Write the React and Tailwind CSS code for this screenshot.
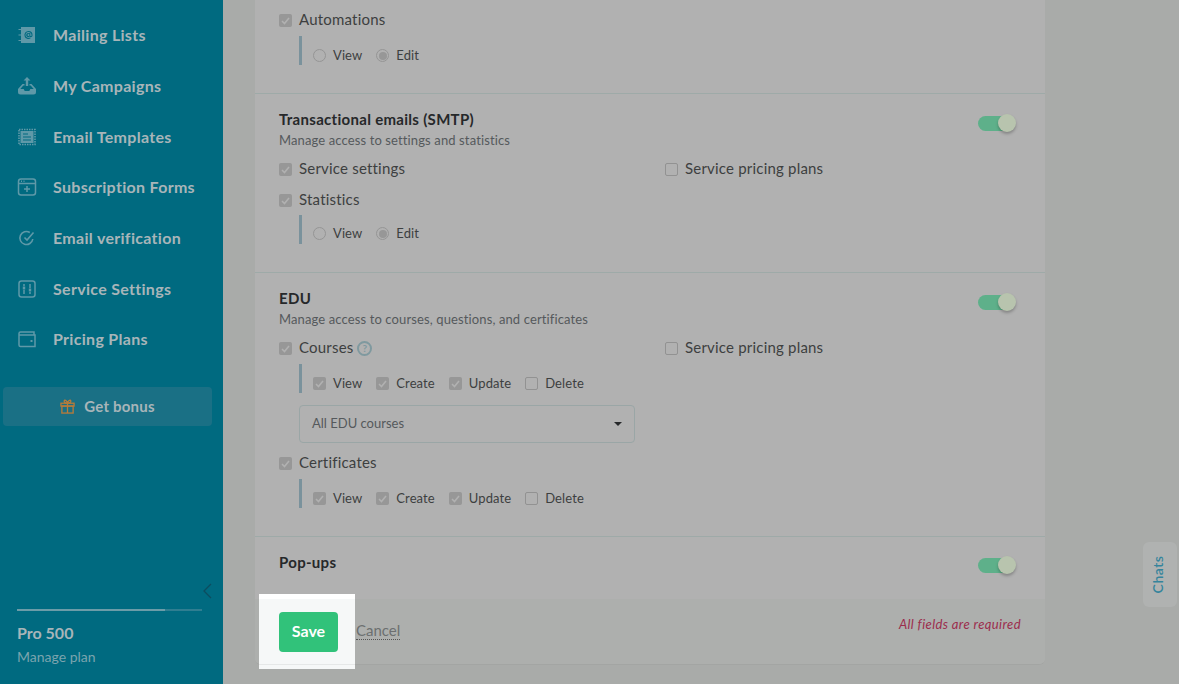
import React from 'react';

const iconClass = 'w-[20px] h-[20px] text-[#5f99a8] shrink-0';

const MailIcon = () => (
  <svg viewBox="0 0 20 20" className={iconClass} fill="currentColor">
    <path fillRule="evenodd" d="M4 2h14v16H4zM11.500 6a4 4 0 1 0 2.200 7.300l-.6-.8a3 3 0 1 1 1.400-2.500v.5a.6.6 0 0 1-1.200 0V8h-1v.4a2 2 0 1 0 .3 3.100 1.600 1.600 0 0 0 2.900-1V10a4 4 0 0 0-4-4zm0 3a1 1 0 1 1 0 2 1 1 0 0 1 0-2z" />
    <path d="M1.500 4H5v1H1.500zM1.500 9.500H5v1H1.500zM1.500 15H5v1H1.500z" />
  </svg>
);

const CampaignIcon = () => (
  <svg viewBox="0 0 20 20" className={iconClass} fill="currentColor">
    <path d="M10 1l3.500 3.500h-2.300V10H8.800V4.500H6.500z" />
    <path d="M5.500 8h2v1.500H6.300L3.300 13h3.400l1 2h4.600l1-2h3.400l-3-3.500h-1.200V8h2L19 13v3a2.500 2.500 0 0 1-2.500 2.500h-13A2.500 2.500 0 0 1 1 16v-3z" />
  </svg>
);

const TemplateIcon = () => (
  <svg viewBox="0 0 20 20" className={iconClass} fill="none" stroke="currentColor">
    <rect x="2" y="2.500" width="16" height="15" strokeWidth="1.600" strokeDasharray="1.500 1" />
    <rect x="3.500" y="4" width="13" height="12" fill="currentColor" stroke="none" />
    <path d="M6 7h5M6 10h8M6 13h8" stroke="#006a80" strokeWidth="1.100" />
  </svg>
);

const FormIcon = () => (
  <svg viewBox="0 0 20 20" className={iconClass} fill="none" stroke="currentColor" strokeWidth="1.500">
    <rect x="1.500" y="2" width="17" height="16" rx="2.500" />
    <path d="M2 6.500h16M4 4.300h1M6.500 4.300h1M10 9v6M7 12h6" />
  </svg>
);

const VerifyIcon = () => (
  <svg viewBox="0 0 20 20" className={iconClass} fill="none" stroke="currentColor" strokeWidth="1.600">
    <path d="M15.800 11a6.500 6.500 0 1 1-3-6.500" />
    <path d="M7.500 9.500l2.500 2.500 6.500-7.500" />
  </svg>
);

const SettingsIcon = () => (
  <svg viewBox="0 0 20 20" className={iconClass} fill="none" stroke="currentColor" strokeWidth="1.500">
    <rect x="2" y="2" width="16" height="16" rx="2.500" />
    <path d="M7 5v2M7 11v4M13 5v4M13 13v2" />
    <rect x="5.800" y="7.500" width="2.400" height="3" fill="currentColor" stroke="none" />
    <rect x="11.800" y="9.500" width="2.400" height="3" fill="currentColor" stroke="none" />
  </svg>
);

const WalletIcon = () => (
  <svg viewBox="0 0 20 20" className={iconClass} fill="none" stroke="currentColor" strokeWidth="1.500">
    <path d="M17 6V3H3.500A1.500 1.500 0 0 0 2 4.500V16a1.500 1.500 0 0 0 1.500 1.500h14.500V6H2.500" />
    <path d="M13.500 12h2" strokeWidth="2" />
  </svg>
);

const GiftIcon = () => (
  <svg viewBox="0 0 16 16" className="w-[15px] h-[15px] text-[#b97b3a]" fill="none" stroke="currentColor" strokeWidth="1.400">
    <rect x="1" y="4.500" width="14" height="3" />
    <rect x="2" y="7.500" width="12" height="7.500" />
    <path d="M8 4.500V15M8 4.500C6 4.500 4 3.500 4.500 2S7.500 1.500 8 4.500zM8 4.500c2 0 4-1 3.500-2.500S8.500 1.500 8 4.500z" />
  </svg>
);

const navItems = [
  { label: 'Mailing Lists', icon: MailIcon },
  { label: 'My Campaigns', icon: CampaignIcon },
  { label: 'Email Templates', icon: TemplateIcon },
  { label: 'Subscription Forms', icon: FormIcon },
  { label: 'Email verification', icon: VerifyIcon },
  { label: 'Service Settings', icon: SettingsIcon },
  { label: 'Pricing Plans', icon: WalletIcon },
];

const Check = ({ checked }) => (
  <span className={`w-[13px] h-[13px] rounded-[2px] shrink-0 flex items-center justify-center ${checked ? 'bg-[#979797]' : 'border border-[#929292]'}`}>
    {checked && (
      <svg viewBox="0 0 13 13" className="w-[13px] h-[13px]" fill="none" stroke="#b1b1b1" strokeWidth="1.600">
        <path d="M3 7l2.500 2.500L10 4" />
      </svg>
    )}
  </span>
);

const Radio = ({ checked }) => (
  <span className="w-[13px] h-[13px] rounded-full border border-[#959595] shrink-0 flex items-center justify-center">
    {checked && <span className="w-[8px] h-[8px] rounded-full bg-[#979797]" />}
  </span>
);

const CheckRow = ({ label, checked = true, help, className = '' }) => (
  <div className={`flex items-center gap-[7px] h-[19px] text-[15px] tracking-[0.2px] text-[#3d3f40] ${className}`}>
    <Check checked={checked} />
    <span className="-mt-[2px]">{label}</span>
    {help && (
      <span className="w-[15px] h-[15px] -ml-[3px] rounded-full border-2 border-[#7f999f] text-[#7f999f] text-[10px] font-bold flex items-center justify-center">?</span>
    )}
  </div>
);

const SubRow = ({ children, tight, className = '' }) => (
  <div className={`border-l-[3px] border-[#7a929c] h-[29px] pl-[11px] flex items-center gap-[14px] text-[13px] tracking-[0.1px] text-[#3d3f40] ${tight ? 'pt-[8px]' : 'pt-[10px]'} ${className}`}>
    {children}
  </div>
);

const SubOption = ({ label, checked, radio }) => (
  <label className="flex items-center gap-[7px]">
    {radio ? <Radio checked={checked} /> : <Check checked={checked} />}
    <span>{label}</span>
  </label>
);

const CrudRow = ({ className }) => (
  <SubRow className={className}>
    <SubOption label="View" checked />
    <SubOption label="Create" checked />
    <SubOption label="Update" checked />
    <SubOption label="Delete" checked={false} />
  </SubRow>
);

const ModeRow = ({ className, tight }) => (
  <SubRow className={className} tight={tight}>
    <SubOption label="View" radio checked={false} />
    <SubOption label="Edit" radio checked />
  </SubRow>
);

const Toggle = () => (
  <div className="absolute right-[29px] w-[38px] h-[18px] flex items-center">
    <span className="w-[32px] h-[15px] rounded-full bg-[#5eb08a]" />
    <span className="absolute right-0 w-[18px] h-[18px] rounded-full bg-[#b8c4ae] shadow-[0_2px_3px_rgba(0,0,0,0.25)]" />
  </div>
);

const SectionHead = ({ title, subtitle }) => (
  <div className="relative">
    <div className="text-[15px] leading-[20px] font-bold tracking-[0.3px] text-[#26282a]">{title}</div>
    {subtitle && <div className="text-[13px] leading-[18px] mt-[2px] tracking-[0.12px] text-[#55595c]">{subtitle}</div>}
  </div>
);

export default function App() {
  return (
    <div className="relative flex h-[684px] overflow-hidden bg-[#a9aba9] font-['Lato',sans-serif]">
      <aside className="w-[223px] shrink-0 bg-[#006a80] flex flex-col relative">
        <nav className="pt-[10px]">
          {navItems.map(({ label, icon: Icon }) => (
            <div key={label} className="h-[50.700px] flex items-center pl-[17px] gap-[16px] text-[16px] tracking-[0.3px] font-bold text-[#a8b5b9]">
              <Icon />
              <span>{label}</span>
            </div>
          ))}
        </nav>
        <div className="mx-[3px] mt-[22.100px] w-[209px] h-[39px] rounded-[4px] bg-[#1a7085] flex items-center justify-center gap-[9px] text-[15px] tracking-[0.2px] font-bold text-[#a8b5b9]">
          <GiftIcon />
          <span className="-mt-px">Get bonus</span>
        </div>
        <div className="mt-auto px-[17px] pb-[18px]">
          <div className="h-[2px] w-[185px] bg-[#2f7e91] mb-[12px]">
            <div className="h-full w-[148px] bg-[#6c9ca8]" />
          </div>
          <div className="text-[16px] leading-[20px] font-bold text-[#a8b5b9]">Pro 500</div>
          <div className="text-[14px] leading-[18px] mt-[5px] text-[#7ba4ae]">Manage plan</div>
        </div>
        <svg viewBox="0 0 10 16" className="absolute left-[202px] top-[583px] w-[10px] h-[16px] text-[#0c4d5f]" fill="none" stroke="currentColor" strokeWidth="1.300">
          <path d="M9 1L2 8l7 7" />
        </svg>
      </aside>

      <main className="flex-1 pl-[32px] pr-[134px]">
        <div className="bg-[#b1b1b1] rounded-b-[6px] border-b border-[#a3a5a3]">
          <section className="h-[93px] px-[24px] pt-[11px]">
            <CheckRow label="Automations" />
            <ModeRow className="ml-[20px] mt-[6px]" />
          </section>

          <section className="relative h-[179px] border-t border-[#9eaaa8] px-[24px] pt-[15px]">
            <SectionHead title="Transactional emails (SMTP)" subtitle="Manage access to settings and statistics" />
            <div className="absolute top-[20px] right-0 left-0 flex justify-end items-center h-[18px]"><Toggle /></div>
            <div className="grid grid-cols-[386px_1fr] mt-[11px]">
              <CheckRow label="Service settings" />
              <CheckRow label="Service pricing plans" checked={false} />
            </div>
            <CheckRow label="Statistics" className="mt-[12px]" />
            <ModeRow tight className="ml-[20px] mt-[5px]" />
          </section>

          <section className="relative h-[264px] border-t border-[#9eaaa8] px-[24px] pt-[15px]">
            <SectionHead title="EDU" subtitle="Manage access to courses, questions, and certificates" />
            <div className="absolute top-[20px] right-0 left-0 flex justify-end items-center h-[18px]"><Toggle /></div>
            <div className="grid grid-cols-[386px_1fr] mt-[11px]">
              <CheckRow label="Courses" help />
              <CheckRow label="Service pricing plans" checked={false} />
            </div>
            <CrudRow className="ml-[20px] mt-[6px]" />
            <div className="ml-[20px] mt-[12px] w-[336px] h-[38px] border border-[#9aa6a6] rounded-[4px] flex items-center justify-between pl-[12px] pr-[12px] text-[13px] text-[#55595c]">
              <span className="-mt-px">All EDU courses</span>
              <span className="w-0 h-0 border-x-[4px] border-x-transparent border-t-[4px] border-t-[#26282a]" />
            </div>
            <CheckRow label="Certificates" className="mt-[11px]" />
            <CrudRow className="ml-[20px] mt-[6px]" />
          </section>

          <section className="relative h-[63px] border-t border-[#9eaaa8] px-[24px] pt-[15px]">
            <SectionHead title="Pop-ups" />
            <div className="absolute top-[19px] right-0 left-0 flex justify-end items-center h-[18px]"><Toggle /></div>
          </section>

          <footer className="h-[65px] bg-[#adafad] px-[24px] flex items-start rounded-b-[6px]">
            <div className="relative mt-[13px]">
              <div className="absolute left-[-20px] top-[-18px] w-[96px] h-[75px] bg-[#f6f8f8] border-t-[5px] border-white">
                <div className="absolute left-0 right-0 top-[65px] h-px bg-[#e6e8e8]" />
              </div>
              <button className="relative w-[59px] h-[40px] rounded-[4px] bg-[#31c27a] text-white text-[16px] font-bold pb-[3px]">Save</button>
            </div>
            <span className="relative ml-[18px] mt-[23px] text-[15px] leading-[17px] text-[#6c6f70] border-b border-dotted border-[#555]">Cancel</span>
            <span className="ml-auto mt-[16px] text-[13px] tracking-[0.4px] italic text-[#9c2c4c]">All fields are required</span>
          </footer>
        </div>
      </main>

      <div className="absolute right-[2px] top-[542px] w-[34px] h-[65px] rounded-[6px] bg-[#b0b2b1] flex items-center justify-center pr-[5px]">
        <span className="-rotate-90 text-[14px] font-semibold tracking-[0.5px] text-[#35849c]">Chats</span>
      </div>
    </div>
  );
}
